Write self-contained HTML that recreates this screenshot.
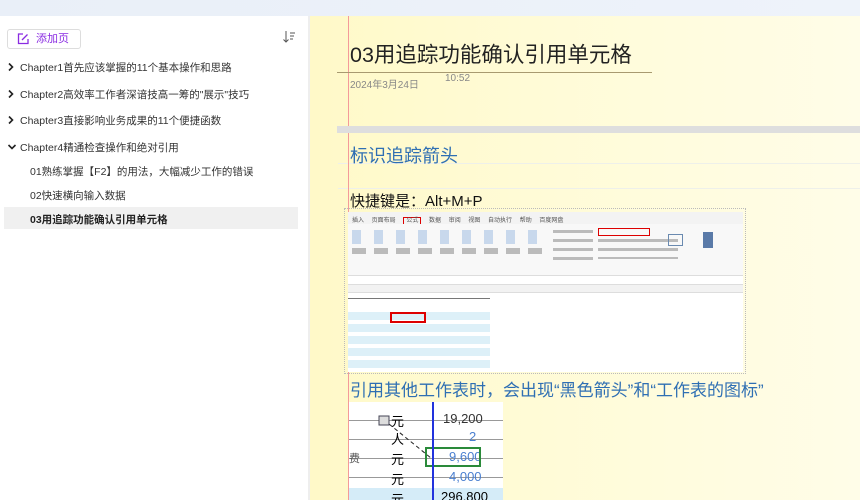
<!DOCTYPE html>
<html><head><meta charset="utf-8"><style>
*{margin:0;padding:0;box-sizing:border-box}
body{width:860px;height:500px;overflow:hidden;position:relative;font-family:"Liberation Sans","Noto Sans CJK SC",sans-serif;background:#fff}
.top{position:absolute;left:0;top:0;width:860px;height:16px;background:linear-gradient(90deg,#e9eff8,#eef3fa)}
.btn{position:absolute;left:7px;top:29px;width:74px;height:20px;border:1px solid #ddd;border-radius:3px;font-size:11px;color:#8a2be2;line-height:18px;padding-left:28px}
.btn svg{position:absolute;left:9px;top:3px}
.it{position:absolute;font-size:10.5px;color:#333;white-space:nowrap}
.ch{position:absolute;left:7px;width:8px;height:10px}
.sel{position:absolute;left:4px;top:207px;width:294px;height:22px;background:#f0f0f0}
.main{position:absolute;left:308px;top:16px;width:552px;height:484px;background:linear-gradient(90deg,#fff9c8,#fffbd6 40%,#fffde8);border-left:2px solid #eee}
.rule{position:absolute;left:338px;width:522px;height:1px;background:#eef0ea}
.pink{position:absolute;left:348px;top:16px;width:1px;height:484px;background:#f49a9a}
.abs{position:absolute;white-space:nowrap}
</style></head><body>
<div class="top"></div>
<div class="btn"><svg width="12" height="12" viewBox="0 0 12 12"><path d="M6 1H1.5v9.5H11V6" fill="none" stroke="#8a2be2" stroke-width="1.3"/><path d="M5 7l5.5-5.5" stroke="#8a2be2" stroke-width="1.3"/></svg>添加页</div>
<svg class="abs" style="left:282px;top:30px" width="14" height="14" viewBox="0 0 14 14"><path d="M4 1v11M1.5 9.5L4 12l2.5-2.5M8 3h5M8 6h4M8 9h3" fill="none" stroke="#555" stroke-width="1"/></svg>
<div class="sel"></div>
<svg class="ch" style="top:62px" viewBox="0 0 8 10"><path d="M2 1.5L5.5 5 2 8.5" fill="none" stroke="#222" stroke-width="1.6"/></svg>
<svg class="ch" style="top:89px" viewBox="0 0 8 10"><path d="M2 1.5L5.5 5 2 8.5" fill="none" stroke="#222" stroke-width="1.6"/></svg>
<svg class="ch" style="top:115px" viewBox="0 0 8 10"><path d="M2 1.5L5.5 5 2 8.5" fill="none" stroke="#222" stroke-width="1.6"/></svg>
<svg class="ch" style="top:142px;width:10px" viewBox="0 0 10 10"><path d="M1.5 3L5 6.5 8.5 3" fill="none" stroke="#222" stroke-width="1.6"/></svg>
<div class="it" style="left:20px;top:60px">Chapter1首先应该掌握的11个基本操作和思路</div>
<div class="it" style="left:20px;top:87px">Chapter2高效率工作者深谙技高一筹的"展示"技巧</div>
<div class="it" style="left:20px;top:113px">Chapter3直接影响业务成果的11个便捷函数</div>
<div class="it" style="left:20px;top:140px">Chapter4精通检查操作和绝对引用</div>
<div class="it" style="left:30px;top:164px">01熟练掌握【F2】的用法，大幅减少工作的错误</div>
<div class="it" style="left:30px;top:188px">02快速横向输入数据</div>
<div class="it" style="left:30px;top:212px;font-weight:bold;color:#222">03用追踪功能确认引用单元格</div>
<div class="main"></div>
<div class="rule" style="top:163px"></div><div class="rule" style="top:188px"></div>
<div class="pink"></div>
<div class="abs" style="left:350px;top:38px;font-size:21.5px;color:#222">03用追踪功能确认引用单元格</div>
<div class="abs" style="left:337px;top:72px;width:315px;height:1px;background:#a89a70"></div>
<div class="abs" style="left:350px;top:76px;font-size:10px;color:#888">2024年3月24日</div>
<div class="abs" style="left:445px;top:73px;font-size:10px;color:#888">10:52</div>
<div class="abs" style="left:337px;top:126px;width:523px;height:7px;background:#dedede"></div>
<div class="abs" style="left:350px;top:142px;font-size:18px;color:#2f6fb3">标识追踪箭头</div>
<div class="abs" style="left:350px;top:190px;font-size:15px;color:#111">快捷键是：Alt+M+P</div>
<!-- screenshot 1 -->
<div class="abs" style="left:344px;top:208px;width:402px;height:166px;border:1px dotted #bbb"></div>
<div class="abs" style="left:348px;top:212px;width:395px;height:160px;background:#fff;overflow:hidden">
 <div style="height:12px;background:#f3f3f3;font-size:6px;color:#555;padding:3px 4px;word-spacing:6px">插入 页面布局 <span style="border:1px solid #d00;padding:0 2px">公式</span> 数据 审阅 视图 自动执行 帮助 百度网盘</div>
 <div style="height:52px;background:#f8f8f8;border-bottom:1px solid #ddd;position:relative;font-size:5px;color:#666">
  <div style="position:absolute;left:4px;top:6px;width:190px;height:14px;background:repeating-linear-gradient(90deg,#c8d8ec 0 9px,transparent 9px 22px)"></div>
  <div style="position:absolute;left:4px;top:24px;width:195px;height:6px;background:repeating-linear-gradient(90deg,#bbb 0 14px,transparent 14px 22px)"></div>
  <div style="position:absolute;left:250px;top:4px;width:52px;height:8px;border:1px solid #d00"></div>
  <div style="position:absolute;left:205px;top:6px;width:40px;height:30px;background:repeating-linear-gradient(180deg,#bbb 0 3px,transparent 3px 9px)"></div>
  <div style="position:absolute;left:250px;top:15px;width:80px;height:20px;background:repeating-linear-gradient(180deg,#bbb 0 3px,transparent 3px 9px)"></div>
  <div style="position:absolute;left:320px;top:10px;width:15px;height:12px;border:1px solid #6a8ab0"></div>
  <div style="position:absolute;left:355px;top:8px;width:10px;height:16px;background:#5a7aa8"></div>
 </div>
 <div style="height:9px;border-bottom:1px solid #ddd"></div>
 <div style="height:8px;background:#f2f2f2;border-bottom:1px solid #ddd"></div>
 <div style="position:absolute;left:0;top:86px;width:142px;height:1px;background:#777"></div>
 <div style="position:absolute;left:0;top:100px;width:142px;height:60px;background:repeating-linear-gradient(180deg,#ddf0f8 0 8px,#fff 8px 12px)"></div>
 <div style="position:absolute;left:42px;top:100px;width:36px;height:11px;border:2px solid #d00"></div>
</div>
<div class="abs" style="left:350px;top:376px;font-size:17px;color:#2f6fb3">引用其他工作表时，会出现“黑色箭头”和“工作表的图标”</div>
<!-- screenshot 2 -->
<div class="abs" style="left:349px;top:402px;width:154px;height:98px;background:#fff;font-size:13px;overflow:hidden">
 <div style="position:absolute;left:0;top:0;width:154px;height:98px;background:repeating-linear-gradient(180deg,#fff 0 18px,#999 18px 19px)"></div>
 <div style="position:absolute;left:0;top:86px;width:154px;height:14px;background:#d5ecf8"></div>
 <div style="position:absolute;left:42px;top:9px">元</div><div style="position:absolute;left:94px;top:9px;color:#333">19,200</div>
 <div style="position:absolute;left:42px;top:27px">人</div><div style="position:absolute;left:120px;top:27px;color:#4a7fd0">2</div>
 <div style="position:absolute;left:0;top:48px;color:#555;font-size:11px">费</div><div style="position:absolute;left:42px;top:47px">元</div><div style="position:absolute;left:100px;top:47px;color:#4a7fd0">9,600</div>
 <div style="position:absolute;left:42px;top:67px">元</div><div style="position:absolute;left:100px;top:67px;color:#4a7fd0">4,000</div>
 <div style="position:absolute;left:42px;top:87px">元</div><div style="position:absolute;left:92px;top:87px">296,800</div>
 <div style="position:absolute;left:76px;top:45px;width:56px;height:20px;border:2px solid #2a8a3a"></div>
 <div style="position:absolute;left:83px;top:0;width:2px;height:98px;background:#2233dd"></div>
 <svg style="position:absolute;left:0;top:0" width="154" height="98"><path d="M40 22L82 56" stroke="#222" stroke-dasharray="4 3"/><rect x="30" y="14" width="10" height="9" fill="#ddd" stroke="#445"/></svg>
</div>
</body></html>
